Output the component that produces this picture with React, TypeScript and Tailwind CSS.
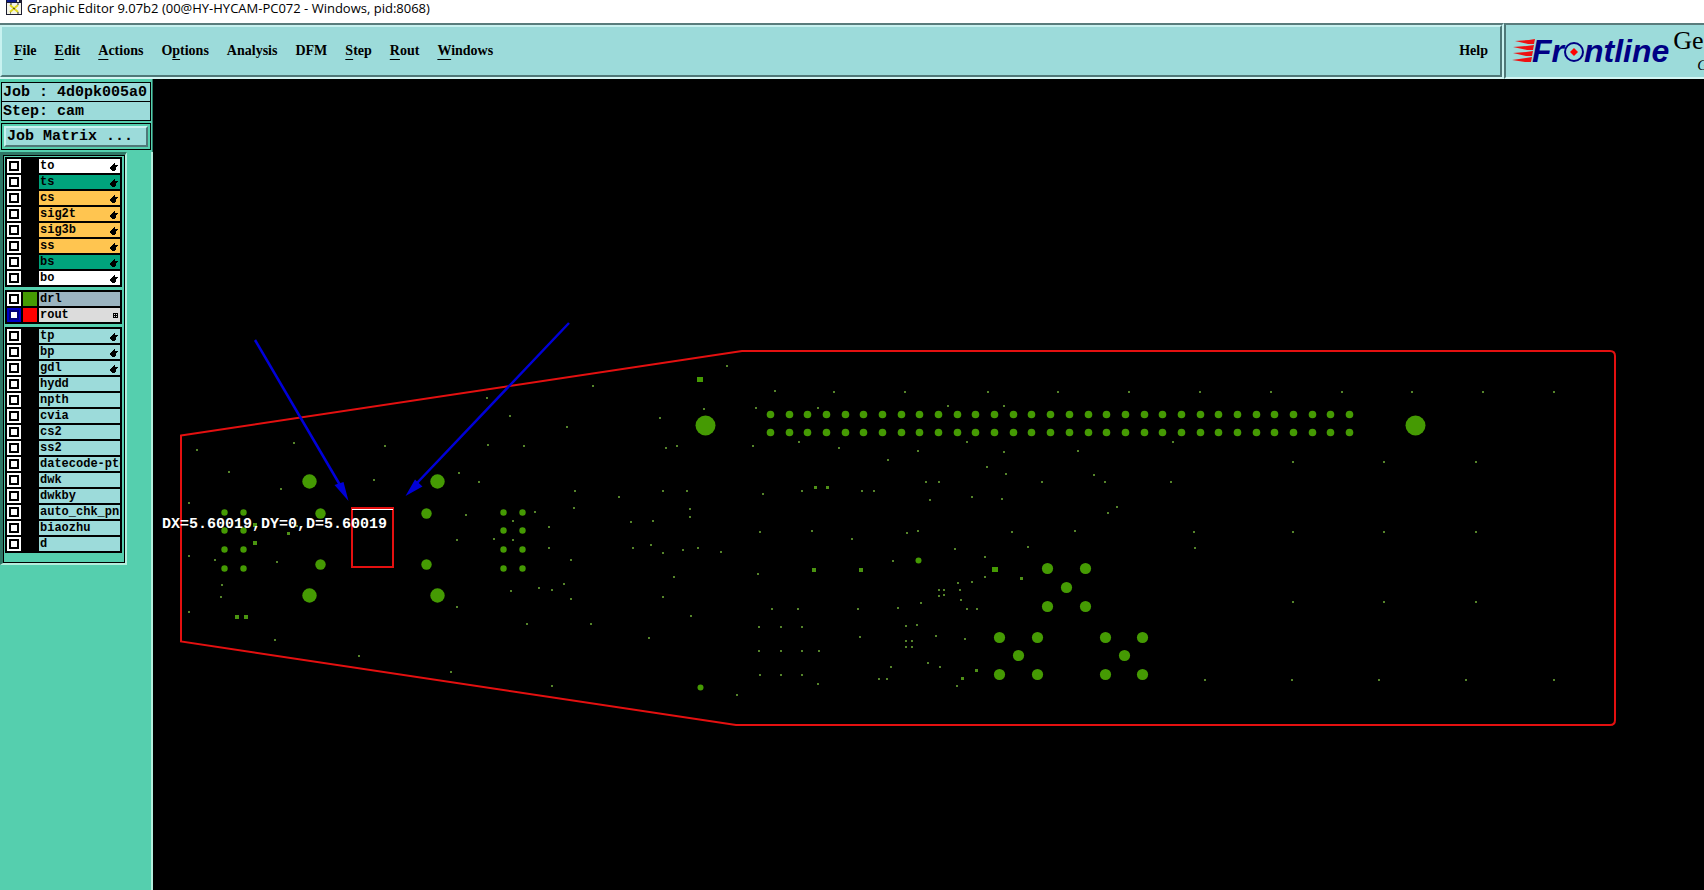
import React from 'react';

type Point = [number, number];

interface Layer {
  name: string;
  fill: string;
  swatch?: string;
  mark?: 'hand' | 'grid';
  active?: boolean;
}

const MENU = [
  { before: '', key: 'F', after: 'ile' },
  { before: '', key: 'E', after: 'dit' },
  { before: '', key: 'A', after: 'ctions' },
  { before: 'O', key: 'p', after: 'tions' },
  { before: 'Analysis', key: '', after: '' },
  { before: 'DFM', key: '', after: '' },
  { before: '', key: 'S', after: 'tep' },
  { before: '', key: 'R', after: 'out' },
  { before: '', key: 'W', after: 'indows' },
];

const LAYER_GROUPS: Layer[][] = [
  [
    { name: 'to', fill: 'bg-white', mark: 'hand' },
    { name: 'ts', fill: 'bg-[#00a47c]', mark: 'hand' },
    { name: 'cs', fill: 'bg-[#ffc550]', mark: 'hand' },
    { name: 'sig2t', fill: 'bg-[#ffc550]', mark: 'hand' },
    { name: 'sig3b', fill: 'bg-[#ffc550]', mark: 'hand' },
    { name: 'ss', fill: 'bg-[#ffc550]', mark: 'hand' },
    { name: 'bs', fill: 'bg-[#00a47c]', mark: 'hand' },
    { name: 'bo', fill: 'bg-white', mark: 'hand' },
  ],
  [
    { name: 'drl', fill: 'bg-[#9bb4c0]', swatch: 'bg-[#459a03]' },
    { name: 'rout', fill: 'bg-[#dcdcdc]', swatch: 'bg-[#ff0000]', mark: 'grid', active: true },
  ],
  [
    { name: 'tp', fill: 'bg-[#9cdbda]', mark: 'hand' },
    { name: 'bp', fill: 'bg-[#9cdbda]', mark: 'hand' },
    { name: 'gdl', fill: 'bg-[#9cdbda]', mark: 'hand' },
    { name: 'hydd', fill: 'bg-[#9cdbda]' },
    { name: 'npth', fill: 'bg-[#9cdbda]' },
    { name: 'cvia', fill: 'bg-[#9cdbda]' },
    { name: 'cs2', fill: 'bg-[#9cdbda]' },
    { name: 'ss2', fill: 'bg-[#9cdbda]' },
    { name: 'datecode-ptc', fill: 'bg-[#9cdbda]' },
    { name: 'dwk', fill: 'bg-[#9cdbda]' },
    { name: 'dwkby', fill: 'bg-[#9cdbda]' },
    { name: 'auto_chk_pnl', fill: 'bg-[#9cdbda]' },
    { name: 'biaozhu', fill: 'bg-[#9cdbda]' },
    { name: 'd', fill: 'bg-[#9cdbda]' },
  ],
];

// Drill hits, grouped by tool size
const VIAS: Point[] = [
  [487, 398], [510, 416], [567, 427], [488, 445], [524, 446], [459, 473], [479, 482], [385, 446],
  [294, 443], [197, 450], [229, 472], [281, 489], [374, 480], [189, 503], [189, 556], [215, 560],
  [277, 562], [222, 585], [221, 597], [189, 612], [275, 640], [359, 656], [451, 672], [552, 686],
  [457, 607], [511, 591], [539, 588], [552, 590], [564, 584], [571, 599], [527, 624], [457, 540],
  [466, 515], [494, 539], [513, 521], [513, 540], [535, 512], [549, 527], [549, 548], [571, 560],
  [575, 491], [574, 508], [297, 526], [593, 386], [727, 366], [704, 409], [660, 418], [666, 448],
  [677, 446], [775, 391], [834, 392], [905, 392], [988, 392], [756, 408], [818, 408], [948, 406],
  [799, 442], [753, 446], [839, 448], [888, 460], [918, 451], [967, 442], [987, 467], [926, 482],
  [939, 482], [930, 500], [972, 497], [619, 497], [663, 491], [687, 491], [690, 509], [690, 517],
  [631, 522], [653, 521], [763, 494], [802, 491], [862, 491], [874, 491], [760, 532], [812, 531],
  [852, 539], [907, 533], [918, 531], [633, 548], [651, 545], [663, 553], [683, 550], [698, 548],
  [721, 552], [955, 549], [985, 557], [893, 561], [758, 574], [674, 577], [663, 597], [691, 616],
  [591, 624], [649, 638], [985, 577], [972, 582], [958, 583], [960, 590], [961, 600], [939, 590],
  [944, 590], [939, 596], [944, 595], [967, 609], [977, 609], [921, 603], [898, 608], [858, 609],
  [772, 609], [798, 609], [906, 626], [917, 625], [759, 627], [781, 627], [802, 627], [860, 637],
  [906, 641], [912, 641], [906, 647], [912, 647], [936, 636], [965, 639], [759, 651], [781, 651],
  [802, 651], [819, 651], [760, 675], [781, 675], [802, 675], [818, 684], [737, 695], [879, 679],
  [887, 679], [891, 667], [928, 663], [940, 667], [957, 686], [1058, 392], [1129, 392], [1200, 392],
  [1271, 392], [1342, 392], [1412, 392], [1483, 392], [1554, 392], [1004, 406], [1173, 442],
  [1004, 452], [1078, 451], [1006, 474], [1042, 482], [1094, 475], [1105, 482], [1171, 482],
  [1002, 499], [1117, 507], [1108, 513], [1075, 531], [1012, 532], [1028, 547], [1194, 532],
  [1195, 548], [1293, 462], [1384, 462], [1476, 462], [1293, 532], [1384, 532], [1476, 532],
  [1293, 602], [1384, 602], [1476, 602], [1205, 680], [1292, 680], [1379, 680], [1466, 680],
  [1554, 680],
];

const SMALL_PADS: Point[] = [
  [237, 617], [246, 617], [255, 525], [255, 543], [814, 570], [861, 570],
];

const TINY_PADS: Point[] = [
  [288, 533], [815, 487], [827, 487], [962, 678], [976, 670], [1021, 578],
];

const WIDE_PADS: Point[] = [[700, 379], [995, 569]];
const ROUND_PADS: Point[] = [[700, 687], [918, 560]];

const SIDE_ROWS = [512, 530, 549, 568];
const SIDE_PADS: Point[] = [224, 243, 503, 522].flatMap((x) => SIDE_ROWS.map((y): Point => [x, y]));

const HEADER_PINS: Point[] = Array.from({ length: 32 }, (_, i) => Math.round(770 + (i * 579) / 31)).flatMap(
  (x): Point[] => [[x, 414], [x, 432]],
);

const CONNECTOR_PADS: Point[] = [
  [1047, 568], [1085, 568], [1066, 587], [1047, 606], [1085, 606],
  [999, 637], [1037, 637], [1018, 655], [999, 674], [1037, 674],
  [1105, 637], [1142, 637], [1124, 655], [1105, 674], [1142, 674],
];

const GUIDE_PADS: Point[] = [[320, 513], [426, 513], [320, 564], [426, 564]];
const SHIELD_HOLES: Point[] = [[309, 481], [437, 481], [309, 595], [437, 595]];
const MOUNT_HOLES: Point[] = [[705, 425], [1415, 425]];

const Circles: React.FC<{ at: Point[]; r: number }> = ({ at, r }) => (
  <g fill="#459a03">
    {at.map(([x, y]) => (
      <circle key={`${x}-${y}`} cx={x + 0.5} cy={y + 0.5} r={r} />
    ))}
  </g>
);

const Squares: React.FC<{ at: Point[]; w: number; h: number; fill: string }> = ({ at, w, h, fill }) => (
  <g fill={fill} shapeRendering="crispEdges">
    {at.map(([x, y]) => (
      <rect key={`${x}-${y}`} x={x - w / 2} y={y - h / 2} width={w} height={h} />
    ))}
  </g>
);

const TitleBar: React.FC = () => (
  <header className="flex h-[23px] items-start gap-[4px] overflow-hidden bg-white pl-[6px] font-['Open_Sans','Noto_Sans',sans-serif] text-[13px] leading-4 text-black">
    <svg width="17" height="16" viewBox="0 0 17 16" aria-hidden="true">
      <rect x="0" y="0" width="16" height="15" fill="#1c1c30" />
      <rect x="1" y="0" width="9" height="2" fill="#0a1a8c" />
      <rect x="11" y="0" width="2" height="2" fill="#ddd" />
      <rect x="1" y="3" width="14" height="11" fill="#f4f4e8" />
      <path d="M4 5l8 7M12 5L4 12" stroke="#e0d820" strokeWidth="2" />
      <path d="M4 4h2M11 4h2M7 8l2 1M4 13h1M11 13h2" stroke="#333" strokeWidth="1" />
    </svg>
    <h1>Graphic Editor 9.07b2 (00@HY-HYCAM-PC072 - Windows, pid:8068)</h1>
  </header>
);

const Logo: React.FC = () => (
  <div className="flex shrink-0 items-center">
    <svg width="24" height="26" viewBox="0 0 24 26" fill="#ee1111" aria-hidden="true">
      <path d="M3 3l14-1 6-1-1 5h-6zM1 9l14-1 7-1-1 5h-6zM1 15l13-1 7-1-1 5h-6zM0 22l14-2 6-1-1 5h-6z" />
    </svg>
    <div className="-ml-1 flex items-center font-['Liberation_Sans',Arial,sans-serif] text-[32px] leading-8 font-bold text-[#000084] italic">
      <span>Fr</span>
      <svg width="20" height="22" viewBox="0 0 20 22" aria-label="o">
        <circle cx="10" cy="12" r="9" fill="none" stroke="#000084" strokeWidth="2" />
        <path d="M10 8l4 4-4 4-4-4z" fill="#ff0000" />
      </svg>
      <span>ntline</span>
    </div>
  </div>
);

const MenuBar: React.FC = () => (
  <div className="flex h-14 shrink-0 overflow-hidden bg-[#9cdbda] font-['Liberation_Serif','Times_New_Roman',serif] text-black">
    <div className="min-w-0 flex-1 border-y-2 border-r-2 border-t-[#5a7c7c] border-r-[#c8f2f0] border-b-[#d4f6f4]">
      <nav className="flex h-full items-center gap-[18px] border-2 border-t-[#c8f2f0] border-r-[#4f7878] border-b-[#4f7878] border-l-[#c8f2f0] px-3 text-[14px] leading-5 font-bold">
        {MENU.map(({ before, key, after }) => (
          <button key={before + key + after} type="button">
            {before}
            {key && <span className="underline decoration-1 underline-offset-4">{key}</span>}
            {after}
          </button>
        ))}
        <button type="button" className="ml-auto">Help</button>
      </nav>
    </div>
    <div className="flex w-[200px] shrink-0 items-center overflow-hidden border-y-2 border-l-2 border-t-[#5a7c7c] border-b-[#d4f6f4] border-l-[#4f7878] pl-[6px]">
      <Logo />
      <div className="flex h-full shrink-0 flex-col pl-1">
        <span className="text-[26px] leading-8">Ge</span>
        <span className="pl-6 text-[15px] leading-4 italic">G</span>
      </div>
    </div>
  </div>
);

const HandMark: React.FC = () => (
  <svg className="ml-auto shrink-0" width="8" height="8" viewBox="0 0 8 8" aria-hidden="true">
    <path d="M4 0h1v2h3v1H7v1H6v3H5v1H2V7H1V6H0V4h1V3h1V2h1V1h1z" fill="#000" />
  </svg>
);

const GridMark: React.FC = () => (
  <svg className="ml-auto shrink-0" width="5" height="5" viewBox="0 0 5 5" aria-hidden="true">
    <path d="M0 0h5v5H0z" fill="#000" />
    <path d="M1 1h1v1H1zM3 1h1v1H3zM1 3h1v1H1zM3 3h1v1H3z" fill="#dcdcdc" />
  </svg>
);

const LayerRow: React.FC<{ layer: Layer }> = ({ layer }) => (
  <li className="flex h-[14px] gap-[2px]">
    <input
      type="checkbox"
      id={`layer-${layer.name}`}
      defaultChecked={layer.active}
      className="size-[14px] shrink-0 appearance-none border-2 border-white bg-white inset-ring-2 inset-ring-black checked:border-[#0000c8] checked:inset-ring-[#000078]"
    />
    <span className={`w-[14px] shrink-0 ${layer.swatch ?? 'bg-black'}`} />
    <label
      htmlFor={`layer-${layer.name}`}
      className={`flex min-w-0 flex-1 items-center overflow-hidden pt-px pr-[2px] pl-px text-[12px] leading-[13px] whitespace-nowrap ${layer.fill}`}
    >
      <span>{layer.name}</span>
      {layer.mark === 'hand' && <HandMark />}
      {layer.mark === 'grid' && <GridMark />}
    </label>
  </li>
);

const Sidebar: React.FC = () => (
  <aside className="flex w-[153px] shrink-0 flex-col bg-[#55cfae] font-['Liberation_Mono','Courier_New',monospace] font-bold text-black">
    <div className="h-[73px] border-r border-[#2f7866] pt-[3px] pr-px pl-px">
      <div className="border border-black bg-[#9cdbda] text-[15px] leading-[19px]">
        <p className="h-[19px] border-b border-black pl-px whitespace-pre">Job : 4d0pk005a0</p>
        <p className="h-[18px] pl-px whitespace-pre">Step: cam</p>
      </div>
      <div className="mt-[2px] border border-black p-[2px]">
        <button
          type="button"
          className="block h-[21px] w-full border-2 border-t-[#c8f2f0] border-r-[#4f7878] border-b-[#4f7878] border-l-[#c8f2f0] bg-[#9cdbda] pl-px text-left text-[15px] leading-[17px]"
        >
          Job Matrix ...
        </button>
      </div>
    </div>
    <div className="flex-1 border-r-2 border-[#b4eedd]">
      <div className="w-[127px] border-t-3 border-r-2 border-b-2 border-l-3 border-t-[#2f7866] border-r-[#b4eedd] border-b-[#b4eedd] border-l-[#2f7866]">
        <div className="flex flex-col gap-[3px] border border-black pt-px pr-[2px] pb-[9px] pl-px">
          {LAYER_GROUPS.map((group) => (
            <ul key={group[0].name} className="flex flex-col gap-[2px] bg-black p-[2px]">
              {group.map((layer) => (
                <LayerRow key={layer.name} layer={layer} />
              ))}
            </ul>
          ))}
        </div>
      </div>
    </div>
  </aside>
);

const Board: React.FC = () => (
  <svg className="min-w-0 flex-1 bg-black" role="img" aria-label="Board outline with drill layer">
    <g transform="translate(-153 -79)">
      <Squares at={VIAS} w={2} h={2} fill="#55842a" />
      <Squares at={TINY_PADS} w={3} h={3} fill="#4f9018" />
      <Squares at={SMALL_PADS} w={4} h={4} fill="#4a9410" />
      <Squares at={WIDE_PADS} w={6} h={5} fill="#459a03" />
      <Circles at={SIDE_PADS} r={3.2} />
      <Circles at={ROUND_PADS} r={3} />
      <Circles at={HEADER_PINS} r={3.8} />
      <Circles at={GUIDE_PADS} r={5.2} />
      <Circles at={CONNECTOR_PADS} r={5.6} />
      <Circles at={SHIELD_HOLES} r={7.2} />
      <Circles at={MOUNT_HOLES} r={10} />

      {/* Rout path */}
      <g fill="none" stroke="#e41010" strokeWidth="2">
        <path d="M181 435.5L742 351H1610Q1615 351 1615 356V720Q1615 725 1610 725H736L181 641.5Z" />
        <rect x="352" y="508" width="41" height="59" />
      </g>
      <path d="M352 509.5H393" stroke="#fff" strokeWidth="1" />

      {/* Measurement arrows */}
      <g stroke="#0000d8" strokeWidth="2.5" fill="none">
        <path d="M255 340L340 485M569 323L417 483" />
      </g>
      <path d="M348.5 501L334.5 485L343.5 482ZM405.5 496L415 479.5L422.5 486.5Z" fill="#0000d8" />

      <text
        x="162"
        y="528"
        fill="#fff"
        className="font-['Liberation_Mono','Courier_New',monospace] text-[15px] font-bold"
      >
        DX=5.60019,DY=0,D=5.60019
      </text>
    </g>
  </svg>
);

const App: React.FC = () => {
  return (
    <div className="flex min-h-screen flex-col overflow-hidden bg-black">
      <TitleBar />
      <MenuBar />
      <main className="flex flex-1">
        <Sidebar />
        <Board />
      </main>
    </div>
  );
};

export default App;
